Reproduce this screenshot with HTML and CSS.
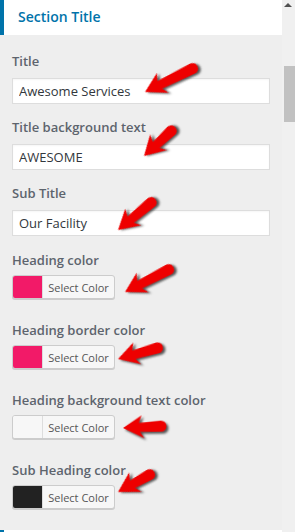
FILE: index.html
```html
<!DOCTYPE html>
<html>
<head>
<meta charset="utf-8">
<link rel="stylesheet" href="styles.css">
</head>
<body>
<div class="frame">
  <div class="panel">
    <div class="section-head">Section Title</div>
    <div class="controls">
      <div class="control">
        <label class="label">Title</label>
        <input class="text" type="text" value="Awesome Services">
      </div>
      <div class="control">
        <label class="label">Title background text</label>
        <input class="text" type="text" value="AWESOME">
      </div>
      <div class="control">
        <label class="label">Sub Title</label>
        <input class="text" type="text" value="Our Facility">
      </div>
      <div class="control color-control first-color">
        <label class="label">Heading color</label>
        <button class="color-btn"><span class="swatch pink"></span><span class="btn-text">Select Color</span></button>
      </div>
      <div class="control color-control">
        <label class="label">Heading border color</label>
        <button class="color-btn"><span class="swatch pink"></span><span class="btn-text">Select Color</span></button>
      </div>
      <div class="control color-control">
        <label class="label">Heading background text color</label>
        <button class="color-btn"><span class="swatch light"></span><span class="btn-text">Select Color</span></button>
      </div>
      <div class="control color-control">
        <label class="label">Sub Heading color</label>
        <button class="color-btn"><span class="swatch dark"></span><span class="btn-text">Select Color</span></button>
      </div>
    </div>
    <div class="next-head"></div>
  </div>
  <div class="scrollbar">
    <div class="scroll-up"></div>
    <div class="thumb"></div>
  </div>
  <svg class="arrows" width="295" height="532" viewBox="0 0 295 532">
    <g class="arrow-set">
      <path transform="translate(145 92) rotate(-25.7)" d="M0 0 L19 -12 L16 -4.5 L53 -6 A5.5 5.5 0 0 1 53 5 L17 4.5 L21 11 Z"/>
      <path transform="translate(144 156) rotate(-42)" d="M0 0 L19 -12 L16 -4.5 L37 -6 A5.5 5.5 0 0 1 37 5 L17 4.5 L21 11 Z"/>
      <path transform="translate(118 230) rotate(-39)" d="M0 0 L19 -12 L16 -4.5 L43 -6 A5.5 5.5 0 0 1 43 5 L17 4.5 L21 11 Z"/>
      <path transform="translate(125 292) rotate(-26.6)" d="M0 0 L19 -12 L16 -4.5 L49 -6 A5.5 5.5 0 0 1 49 5 L17 4.5 L21 11 Z"/>
      <path transform="translate(118 359) rotate(-15)" d="M0 0 L19 -12 L16 -4.5 L41 -6 A5.5 5.5 0 0 1 41 5 L17 4.5 L21 11 Z"/>
      <path transform="translate(123 428) rotate(-2)" d="M0 0 L19 -12 L16 -4.5 L38 -6 A5.5 5.5 0 0 1 38 5 L17 4.5 L21 11 Z"/>
      <path transform="translate(118 492) rotate(-28)" d="M0 0 L19 -12 L16 -4.5 L36 -6 A5.5 5.5 0 0 1 36 5 L17 4.5 L21 11 Z"/>
    </g>
  </svg>
</div>
</body>
</html>
```

FILE: styles.css
```css
* { box-sizing: border-box; }
html, body { margin: 0; padding: 0; }
body {
  width: 295px;
  height: 532px;
  overflow: hidden;
  background: #eeeeee;
  font-family: "Open Sans", "Noto Sans", sans-serif;
}
.frame {
  position: relative;
  display: flex;
  width: 295px;
  height: 532px;
}
.panel {
  width: 282px;
  display: flex;
  flex-direction: column;
  background: #eeeeee;
}
.section-head {
  height: 38px;
  background: #ffffff;
  border-left: 4px solid #0073aa;
  padding-left: 14px;
  display: flex;
  align-items: center;
  color: #0073aa;
  font-size: 14px;
  font-weight: 600;
  padding-bottom: 2px;
}
.controls {
  padding: 16px 12px 0 12px;
  display: flex;
  flex-direction: column;
}
.control {
  display: flex;
  flex-direction: column;
  margin-bottom: 13px;
}
.label {
  height: 20px;
  line-height: 20px;
  font-size: 13px;
  font-weight: 600;
  color: #5d646d;
  margin-bottom: 7px;
  white-space: nowrap;
}
.text {
  width: 258px;
  height: 26px;
  margin: 0;
  padding: 0 6px;
  border: 1px solid #dddddd;
  background: #ffffff;
  font-family: inherit;
  font-size: 13px;
  color: #32373c;
  outline: none;
  box-shadow: inset 0 1px 2px rgba(0,0,0,0.04);
}
.color-control { margin-bottom: 21px; }
.color-control .label { margin-bottom: 5px; }
.first-color { margin-top: 1px; }
.color-btn {
  display: flex;
  align-items: stretch;
  width: 103px;
  height: 24px;
  padding: 0;
  margin: 0;
  border: 1px solid #cccccc;
  border-radius: 3px;
  background: #f7f7f7;
  box-shadow: 0 1px 0 #cccccc;
  overflow: hidden;
  font-family: inherit;
}
.swatch {
  width: 30px;
  border-right: 1px solid #dddddd;
}
.swatch.pink { background: #f21a68; }
.swatch.light { background: #f7f7f7; }
.swatch.dark { background: #222222; }
.btn-text {
  flex: 1;
  display: flex;
  align-items: center;
  justify-content: center;
  font-size: 11px;
  color: #555555;
  padding-top: 1px;
}
.next-head {
  margin-top: auto;
  height: 2px;
  background: #ffffff;
  border-left: 4px solid #0073aa;
}
.scrollbar {
  position: relative;
  width: 13px;
  height: 532px;
  background: #f0f0f0;
  display: flex;
  flex-direction: column;
  align-items: flex-end;
}
.scroll-up {
  margin: 3px 3px 0 0;
  width: 0;
  height: 0;
  border-left: 4px solid transparent;
  border-right: 4px solid transparent;
  border-bottom: 4px solid #505050;
}
.thumb {
  margin-top: 59px;
  width: 11px;
  height: 56px;
  background: #c1c1c1;
}
.arrows {
  position: absolute;
  left: 0;
  top: 0;
  pointer-events: none;
}
.arrow-set path {
  fill: #ee0000;
  filter: drop-shadow(2px 2px 1.2px rgba(0,0,0,0.65));
}
```
